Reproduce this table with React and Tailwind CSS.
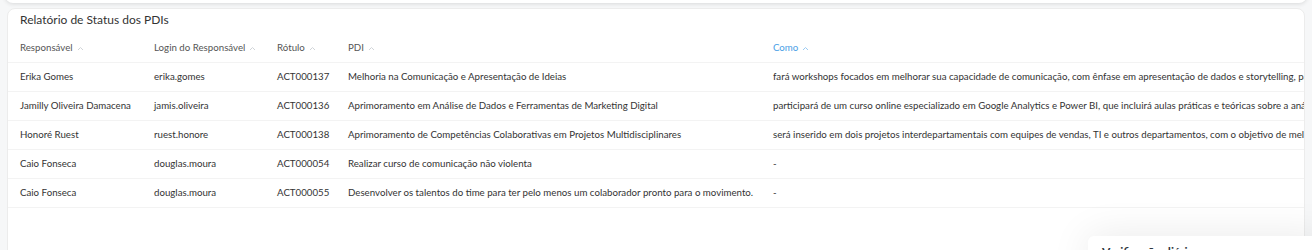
import React from "react";

const columns = [
  { key: "responsavel", label: "Responsável", width: "w-[134px]" },
  { key: "login", label: "Login do Responsável", width: "w-[123px]" },
  { key: "rotulo", label: "Rótulo", width: "w-[71px]" },
  { key: "pdi", label: "PDI", width: "w-[425px]" },
  { key: "como", label: "Como", width: "w-[900px]", active: true },
];

const rows = [
  {
    responsavel: "Erika Gomes",
    login: "erika.gomes",
    rotulo: "ACT000137",
    pdi: "Melhoria na Comunicação e Apresentação de Ideias",
    como: "fará workshops focados em melhorar sua capacidade de comunicação, com ênfase em apresentação de dados e storytelling, para que possa transmitir ideias de forma clara e objetiva.",
  },
  {
    responsavel: "Jamilly Oliveira Damacena",
    login: "jamis.oliveira",
    rotulo: "ACT000136",
    pdi: "Aprimoramento em Análise de Dados e Ferramentas de Marketing Digital",
    como: "participará de um curso online especializado em Google Analytics e Power BI, que incluirá aulas práticas e teóricas sobre a análise de dados de campanhas.",
  },
  {
    responsavel: "Honoré Ruest",
    login: "ruest.honore",
    rotulo: "ACT000138",
    pdi: "Aprimoramento de Competências Colaborativas em Projetos Multidisciplinares",
    como: "será inserido em dois projetos interdepartamentais com equipes de vendas, TI e outros departamentos, com o objetivo de melhorar suas habilidades colaborativas.",
  },
  {
    responsavel: "Caio Fonseca",
    login: "douglas.moura",
    rotulo: "ACT000054",
    pdi: "Realizar curso de comunicação não violenta",
    como: "-",
  },
  {
    responsavel: "Caio Fonseca",
    login: "douglas.moura",
    rotulo: "ACT000055",
    pdi: "Desenvolver os talentos do time para ter pelo menos um colaborador pronto para o movimento.",
    como: "-",
  },
];

function SortArrow({ active }) {
  return (
    <svg
      width="7"
      height="5"
      viewBox="0 0 7 5"
      className="ml-[4px] inline-block"
    >
      <path
        d="M1 4 L3.5 1.5 L6 4"
        fill="none"
        stroke={active ? "#9ccbf2" : "#d0d4d8"}
        strokeWidth="1"
      />
    </svg>
  );
}

export default function App() {
  return (
    <div
      className="relative h-[250px] w-[1312px] overflow-hidden bg-[#f6f7f8]"
      style={{ fontFamily: "Lato, 'Noto Sans', sans-serif" }}
    >
      {/* card above, only its bottom edge shows */}
      <div className="mx-[5px] -mt-[20px] h-[23px] rounded-b-[8px] bg-white shadow-[0_1px_4px_rgba(0,0,0,0.12)]" />

      <div className="ml-[7px] mr-[7px] mt-[5px] h-[260px] overflow-hidden rounded-[8px] border border-[#ececec] bg-white">
        <h2 className="px-[12px] pt-[3px] text-[12px] leading-[16px] text-[#333]">
          Relatório de Status dos PDIs
        </h2>

        <div className="mt-[5px] overflow-hidden">
          <table className="w-[1653px] table-fixed border-collapse text-left">
            <thead>
              <tr className="border-b border-[#f3f3f3]">
                {columns.map((c) => (
                  <th
                    key={c.key}
                    className={`${c.width} h-[29px] whitespace-nowrap px-[12px] text-[9.7px] font-normal ${
                      c.active ? "text-[#4aa0e6]" : "text-[#555]"
                    }`}
                  >
                    {c.label}
                    <SortArrow active={c.active} />
                  </th>
                ))}
              </tr>
            </thead>
            <tbody>
              {rows.map((r, i) => (
                <tr key={i} className="border-b border-[#f3f3f3]">
                  {columns.map((c) => (
                    <td
                      key={c.key}
                      className="h-[29px] overflow-hidden whitespace-nowrap px-[12px] text-[9.7px] text-[#333]"
                    >
                      {r[c.key]}
                    </td>
                  ))}
                </tr>
              ))}
            </tbody>
          </table>
        </div>
      </div>

      {/* floating notice at the bottom right */}
      <div className="absolute left-[1088px] top-[236px] h-[40px] w-[240px] rounded-tl-[6px] bg-white px-[14px] pt-[7px] shadow-[0_0_40px_rgba(0,0,0,0.09)]">
        <div className="flex items-center justify-between">
          <span className="text-[12px] font-bold text-[#2f3640]">
            Verificação diária
          </span>
          <span className="mr-[14px] h-[3px] w-[3px] rounded-full bg-[#e8a0a0]" />
        </div>
      </div>
    </div>
  );
}
